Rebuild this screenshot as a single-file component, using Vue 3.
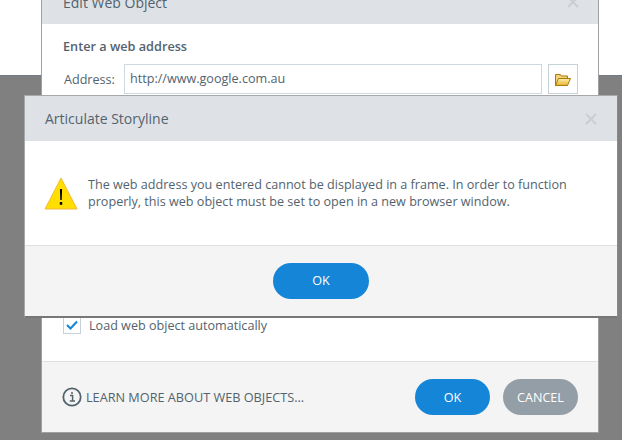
<template>
  <div class="desktop">
    <div class="top-strip"></div>

    <!-- Edit Web Object -->
    <div class="dialog back">
      <div class="dialog-head back-head">
        <span class="dialog-title">Edit Web Object</span>
        <svg class="close" width="12" height="12" viewBox="0 0 12 12">
          <path d="M1 1l10 10M11 1L1 11" stroke="#cbced1" stroke-width="2" />
        </svg>
      </div>
      <div class="dialog-body back-body">
        <div class="section-title">Enter a web address</div>
        <div class="address-row">
          <label class="address-label">Address:</label>
          <div class="address-input">http://www.google.com.au</div>
          <div class="folder-btn">
            <svg width="16" height="13" viewBox="0 0 16 13">
              <defs>
                <linearGradient id="fold" x1="0" y1="0" x2="0" y2="1">
                  <stop offset="0" stop-color="#fff0b0" />
                  <stop offset="1" stop-color="#e8b030" />
                </linearGradient>
              </defs>
              <path d="M.5 12.5V1.5h5l1 1.5h6v2" fill="#f3d27a" stroke="#a87a08" />
              <path d="M.5 12.5l3-7h12l-3 7z" fill="url(#fold)" stroke="#a87a08" />
            </svg>
          </div>
        </div>
        <div class="auto-row">
          <span class="checkbox">
            <svg width="14" height="12" viewBox="0 0 14 12">
              <path d="M2 6l3.5 3.5L12 2.5" fill="none" stroke="#1585d8" stroke-width="2" />
            </svg>
          </span>
          <span>Load web object automatically</span>
        </div>
      </div>
      <div class="dialog-foot back-foot">
        <div class="learn">
          <svg width="20" height="20" viewBox="0 0 20 20">
            <circle cx="10" cy="10" r="8.7" fill="none" stroke="#53636e" stroke-width="1.8" />
            <path d="M8 8.6h2.6v5.2M7.8 14h5.2M10 5v2" fill="none" stroke="#53636e" stroke-width="1.5" />
          </svg>
          <span>LEARN MORE ABOUT WEB OBJECTS...</span>
        </div>
        <div class="foot-buttons">
          <button class="btn primary wide">OK</button>
          <button class="btn muted wide">CANCEL</button>
        </div>
      </div>
    </div>

    <!-- Articulate Storyline alert -->
    <div class="dialog front">
      <div class="dialog-head front-head">
        <span class="dialog-title">Articulate Storyline</span>
        <svg class="close" width="12" height="12" viewBox="0 0 12 12">
          <path d="M1 1l10 10M11 1L1 11" stroke="#cbced1" stroke-width="2" />
        </svg>
      </div>
      <div class="dialog-body front-body">
        <svg class="warn" width="34" height="33" viewBox="0 0 34 33">
          <path d="M17 1L33 32H1z" fill="#ffde00" stroke="#f4b93a" stroke-width="1" />
          <path d="M15.9 12h2.2l-.4 11h-1.4z" fill="#000" />
          <rect x="15.8" y="25" width="2.4" height="2.8" fill="#000" />
        </svg>
        <p class="message">The web address you entered cannot be displayed in a frame. In order to function properly, this web object must be set to open in a new browser window.</p>
      </div>
      <div class="dialog-foot front-foot">
        <button class="btn primary alert-ok">OK</button>
      </div>
    </div>
  </div>
</template>

<script setup>
</script>

<style>
html, body {
  margin: 0;
  background: #808080;
}
</style>

<style scoped>
.desktop {
  position: relative;
  width: 622px;
  height: 440px;
  overflow: hidden;
  background: #808080;
  font-family: "Open Sans", "Noto Sans", sans-serif;
  color: #53636e;
}

.top-strip {
  height: 76px;
  background: #fff;
  border-bottom: 1px solid #6f7a85;
  box-sizing: border-box;
}

.dialog {
  position: absolute;
  display: flex;
  flex-direction: column;
  box-sizing: border-box;
  background: #fff;
}

.back {
  left: 41px;
  top: -20px;
  width: 558px;
  height: 453px;
  border: 1px solid #a0a0a0;
  border-top: none;
}

.front {
  left: 24px;
  top: 95px;
  width: 594px;
  height: 223px;
  border: 1px solid #a8a8a8;
  border-bottom: 2px solid #777;
  border-right: 1px solid #8a8a8a;
}

.dialog-head {
  display: flex;
  align-items: center;
  justify-content: space-between;
  background: #dee2e6;
  flex-shrink: 0;
}

.back-head {
  height: 44px;
  padding: 0 19px 0 21px;
  box-sizing: border-box;
}

.front-head {
  height: 45px;
  padding: 0 20px;
  box-sizing: border-box;
}

.dialog-title {
  font-size: 14px;
  color: #53636e;
}

.back-body {
  flex: 1;
  padding: 14px 20px 0 21px;
  position: relative;
}

.section-title {
  font-size: 12.7px;
  font-weight: 600;
  line-height: 17px;
}

.address-row {
  display: flex;
  align-items: center;
  margin-top: 9px;
  font-size: 12.6px;
}

.address-label {
  width: 60px;
  margin-left: 1px;
}

.address-input {
  box-sizing: border-box;
  width: 418px;
  height: 30px;
  line-height: 28px;
  padding-left: 5px;
  border: 1px solid #ced8df;
}

.folder-btn {
  box-sizing: border-box;
  width: 30px;
  height: 30px;
  margin-left: 6px;
  border: 1px solid #c6d2da;
  display: flex;
  align-items: center;
  justify-content: center;
}

.auto-row {
  display: flex;
  align-items: center;
  gap: 8px;
  margin-top: 222px;
  font-size: 12.6px;
}

.checkbox {
  box-sizing: border-box;
  width: 18px;
  height: 18px;
  border: 1px solid #c6d2da;
  display: flex;
  align-items: center;
  justify-content: center;
}

.dialog-foot {
  background: #f4f4f4;
  border-top: 1px solid #e0e0e0;
  box-sizing: border-box;
  flex-shrink: 0;
  display: flex;
  align-items: center;
}

.back-foot {
  height: 71px;
  padding: 0 20px;
  justify-content: space-between;
}

.front-foot {
  flex: 1;
  justify-content: center;
  padding-bottom: 1px;
}

.front-body {
  height: 104px;
  box-sizing: border-box;
  display: flex;
  align-items: center;
  padding: 0 19px;
  gap: 10px;
}

.warn {
  flex-shrink: 0;
}

.message {
  margin: 0;
  font-size: 12.6px;
  line-height: 17px;
  width: 510px;
}

.learn {
  display: flex;
  align-items: center;
  gap: 4px;
  font-size: 12.7px;
}

.foot-buttons {
  display: flex;
  gap: 13px;
}

.btn {
  height: 36px;
  border: none;
  border-radius: 18px;
  color: #fff;
  font-family: inherit;
  font-size: 12.6px;
  font-weight: 500;
  padding: 0;
}

.wide {
  width: 75px;
}

.alert-ok {
  width: 96px;
}

.primary {
  background: #1585d8;
}

.muted {
  background: #949ea6;
}
</style>
